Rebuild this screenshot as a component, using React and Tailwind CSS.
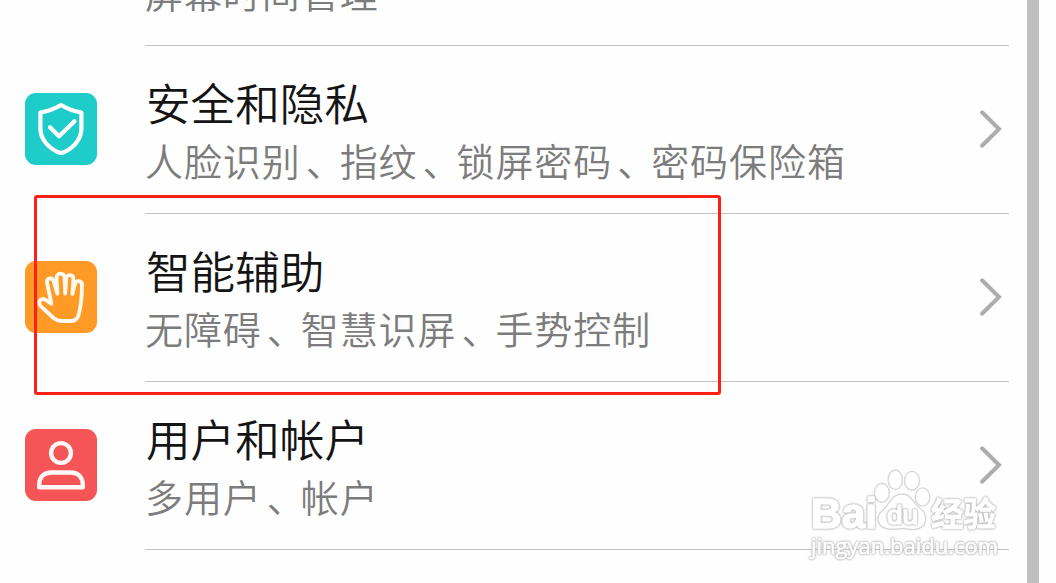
import React from 'react';

function ShieldIcon() {
  return (
    <svg viewBox="0 0 72 72" className="h-[72px] w-[72px]" fill="none" stroke="#fff" strokeWidth="4.2" strokeLinecap="round" strokeLinejoin="round">
      <path d="M36 12C29.5 16 23 18.2 15.4 19.6V35.5C15.4 46.5 24 55.2 33.2 59.2Q36 60.5 38.8 59.2C48 55.2 56.4 46.5 56.4 35.5V19.6C49 18.2 42.5 16 36 12Z" />
      <path d="M25 34.2L34 43.3L49.5 28.2" />
    </svg>
  );
}

function HandIcon() {
  return (
    <svg viewBox="0 0 72 72" className="h-[72px] w-[72px]" fill="none" stroke="#fffaf0" strokeWidth="3.8" strokeLinecap="round" strokeLinejoin="round">
      <path d="M26.2 41.5L22.2 22.5C21.5 19 23 17.8 24.6 17.4C26.6 17 28.1 18 28.8 20.6L32.4 32.6L31.6 17.2C31.5 14 33.2 12.7 35.6 12.7C38 12.7 39.5 14 39.6 17L40.2 32.6L41.2 18.2C41.4 15.2 43.2 13.8 45.4 14.1C47.6 14.4 48.6 16 48.4 18.7L47.4 33L49.8 23.2C50.5 20.7 52 19.8 54 20.2C56 20.7 57.2 22.2 57 24.7C56.9 34.5 56.2 44 53.8 53.2C52.6 57.8 50.6 60 46 60H36.5C33 60 31 59 28.5 57L15.8 45.2C13.8 43.2 14 40.6 15.4 39.2C17 37.6 19.2 37.8 21.2 39.2L26.2 42.8" />
    </svg>
  );
}

function UserIcon() {
  return (
    <svg viewBox="0 0 72 72" className="h-[72px] w-[72px]" fill="none" stroke="#fff8f6" strokeWidth="4.4" strokeLinejoin="round">
      <circle cx="36" cy="24" r="9.9" />
      <path d="M14.2 58.2V56C14.2 48.5 18.5 43.5 26.5 43.5H45.5C53.5 43.5 57.8 48.5 57.8 56V58.2Z" />
    </svg>
  );
}

function Chevron() {
  return (
    <svg viewBox="0 0 26 42" className="h-[42px] w-[26px]" fill="none" stroke="#adadad" strokeWidth="4" strokeLinecap="round" strokeLinejoin="miter">
      <path d="M4 4.3L21 21L4 37.7" />
    </svg>
  );
}

const rows = [
  { title: '安全和隐私', detail: '人脸识别、指纹、锁屏密码、密码保险箱', Icon: ShieldIcon, tile: 'bg-[#1eccca]' },
  { title: '智能辅助', detail: '无障碍、智慧识屏、手势控制', Icon: HandIcon, tile: 'bg-[#ff9a27]' },
  { title: '用户和帐户', detail: '多用户、帐户', Icon: UserIcon, tile: 'bg-[#f65558]' },
];

function Detail({ text }) {
  return (
    <p className="text-[38px] leading-[58px] font-[350] tracking-[0.93px] text-[#7c7c7c]">
      {text.split(/(、)/).map((part, i) =>
        part === '、' ? (
          <span key={i} className="-mr-[5px] inline-block pl-[5px]">{part}</span>
        ) : (
          part
        )
      )}
    </p>
  );
}

function Row({ title, detail, Icon, tile }) {
  return (
    <li className="flex h-[168px] pl-[25px] pr-[18px]">
      <div className={`mt-[47px] h-[72px] w-[72px] shrink-0 overflow-hidden rounded-[11px] ${tile}`}>
        <Icon />
      </div>
      <div className="ml-12 flex flex-1 justify-between border-b border-[#c3c3c3]">
        <div className="pt-[27px] whitespace-nowrap">
          <h2 className="pl-px text-[44.6px] leading-[58px] font-[350] text-[#141414]">{title}</h2>
          <Detail text={detail} />
        </div>
        <div className="mt-[62px] mr-[5px]">
          <Chevron />
        </div>
      </div>
    </li>
  );
}

function Watermark() {
  return (
    <svg viewBox="0 0 196 96" className="absolute left-[806px] top-[466px] h-24 w-[196px]" fill="#fff" stroke="#d8d8d8" strokeWidth="1.4">
      <ellipse cx="75.8" cy="26.8" rx="7.5" ry="9.5" />
      <ellipse cx="89.3" cy="13.7" rx="7.2" ry="9.7" />
      <ellipse cx="106" cy="14.8" rx="7.5" ry="9.4" />
      <ellipse cx="116.6" cy="31" rx="7.3" ry="9.1" />
      <path d="M96 28C105 28 107 37 115 43C122 49 122 62 109 63.5C103 64 100 62.5 96 62.5C91 62.5 87 64 82 63C71 61 69 51 76 45C84 38 85 28 96 28Z" />
      <g fill="#fff" stroke="#fff" strokeWidth="1.6" strokeLinejoin="round" className="[filter:drop-shadow(0_0_0.8px_#a4a4a4)_drop-shadow(0_0_0.6px_#d0d0d0)]">
        <text x="5" y="62" fontFamily="Liberation Sans, Arial, sans-serif" fontSize="43" fontWeight="700" textLength="66" lengthAdjust="spacingAndGlyphs">Bai</text>
        <text x="81" y="57.5" fontFamily="Liberation Sans, Arial, sans-serif" fontSize="26" fontWeight="400" textLength="31" lengthAdjust="spacingAndGlyphs">du</text>
        <text x="125" y="60" fontFamily="Noto Sans CJK SC, sans-serif" fontSize="33" fontWeight="700" strokeWidth="0.8" textLength="65" lengthAdjust="spacingAndGlyphs">经验</text>
      </g>
      <text x="5" y="87.5" fontFamily="Open Sans, Noto Sans, sans-serif" fontSize="22" fontWeight="400" textLength="187" lengthAdjust="spacingAndGlyphs" stroke="#fff" strokeWidth="0.6" className="[filter:drop-shadow(0_0_0.8px_#a4a4a4)_drop-shadow(0_0_0.6px_#d0d0d0)]">jingyan.baidu.com</text>
    </svg>
  );
}

export default function App() {
  return (
    <main className="relative flex h-[583px] w-[1056px] overflow-hidden bg-[#fefefe] font-['Noto_Sans_CJK_SC',sans-serif]">
      <div className="w-[1027px] shrink-0">
        <div className="mr-[18px] ml-[145px] flex h-[46px] flex-col justify-end overflow-hidden border-b border-[#c3c3c3] pb-[24px]">
          <Detail text="屏幕时间管理" />
        </div>
        <ul>
          {rows.map((row) => (
            <Row key={row.title} {...row} />
          ))}
        </ul>
      </div>
      <div className="w-3 shrink-0 bg-[#bfbfbf]" />
      <div className="absolute top-[195px] left-[34px] h-[200px] w-[687px] rounded-[3px] border-3 border-[#ff2015]" />
      <Watermark />
    </main>
  );
}
